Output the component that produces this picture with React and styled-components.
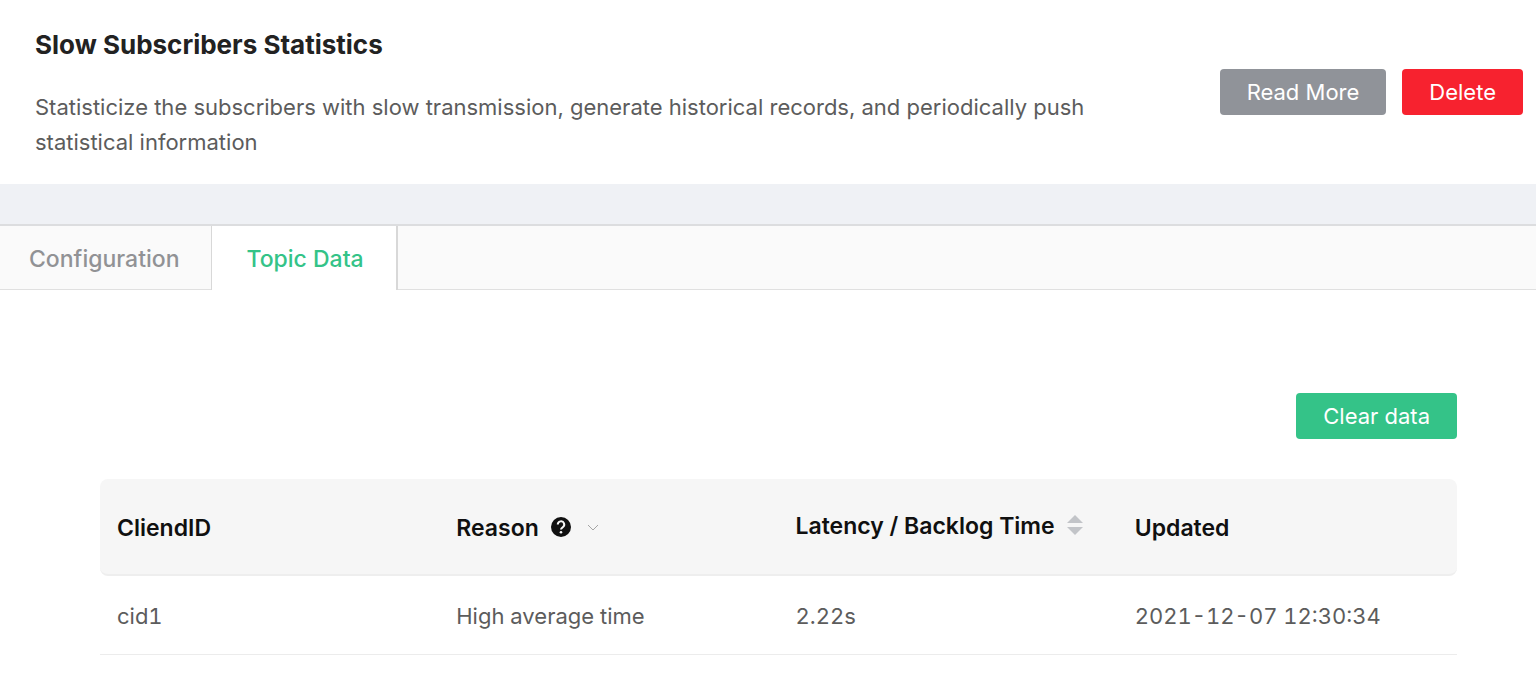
import React, {useState} from 'react';
import styled, {createGlobalStyle} from 'styled-components';

const GlobalStyle = createGlobalStyle`
	* {
		box-sizing: border-box;
	}
	body {
		margin: 0;
		background-color: #ffffff;
		color: #5c5c5c;
		font-family: Inter, 'Liberation Sans', sans-serif;
		font-size: 22px;
		font-optical-sizing: none;
		line-height: 35px;
	}
`;

const Header = styled.header`
	display: flex;
	align-items: center;
	justify-content: space-between;
	gap: 80px;
	padding: 24px 13px 24px 35px;
`;

const Intro = styled.div`
	max-width: 1080px;
`;

const Title = styled.h1`
	margin: 0 0 24px 0;
	color: #222222;
	font-size: 26px;
	font-weight: 700;
	line-height: 42px;
`;

const Description = styled.p`
	margin: 0;
`;

const Actions = styled.div`
	display: flex;
	flex-shrink: 0;
	gap: 16px;
`;

const buttonColors = {
	info: '#909399',
	danger: '#f7222f',
	primary: '#34c388'
};

const Button = styled.button`
	height: 46px;
	padding: 0 27px;
	border: none;
	border-radius: 4px;
	background-color: ${(props) => buttonColors[props.$kind]};
	color: #ffffff;
	font-family: inherit;
	font-size: 22px;
	line-height: 46px;
	white-space: nowrap;
	cursor: pointer;
`;

const TabStrip = styled.div`
	border-top: 40px solid #eff1f5;
`;

const TabBar = styled.div`
	display: flex;
	height: 66px;
	border-top: 2px solid #dcdddf;
	background-color: #fafafa;
	box-shadow: inset 0 -1px 0 0 #e0e0e0;
`;

const Tab = styled.button`
	padding: 2px 32px 0 34px;
	border: none;
	border-right: 1px solid #d8d8d8;
	background-color: transparent;
	color: #919295;
	font-family: inherit;
	font-size: 23px;
	font-weight: 500;
	cursor: pointer;
	&:first-child {
		padding-left: 29px;
	}
	&:last-child {
		border-right-width: 2px;
	}
	&[aria-selected='true'] {
		background-color: #ffffff;
		color: #34c388;
	}
`;

const Content = styled.main`
	padding: 103px 79px 20px 100px;
`;

const Toolbar = styled.div`
	display: flex;
	justify-content: flex-end;
	margin-bottom: 40px;
`;

const Table = styled.table`
	width: 100%;
	table-layout: fixed;
	border-collapse: separate;
	border-spacing: 0;
`;

const HeadCell = styled.th`
	height: 97px;
	padding: ${(props) => (props.$sortable ? '0 17px' : '4px 17px 0 17px')};
	border-bottom: 2px solid #eeeeee;
	background-color: #f6f6f6;
	color: #101010;
	font-size: 23px;
	font-weight: 600;
	text-align: left;
	white-space: nowrap;
	&:first-child {
		border-radius: 8px 0 0 8px;
	}
	&:last-child {
		border-radius: 0 8px 8px 0;
	}
`;

const HeadLabel = styled.span`
	display: flex;
	align-items: center;
	gap: 12px;
`;

const Cell = styled.td`
	height: 79px;
	padding: 2px 17px 0 17px;
	border-bottom: 1px solid #ececec;
	font-variant-numeric: tabular-nums;
`;

const Svg = styled.svg`
	display: block;
	flex-shrink: 0;
	margin-bottom: 3px;
`;

const HelpIcon = () => (
	<Svg width="20" height="20" viewBox="0 0 20 20">
		<circle cx="10" cy="10" r="10" fill="#101010" />
		<path
			d="M6.8 7.6a3.2 3.2 0 1 1 4.8 2.7c-1 .6-1.6 1.1-1.6 2.2"
			fill="none"
			stroke="#f6f6f6"
			strokeWidth="2"
		/>
		<circle cx="10" cy="15.2" r="1.3" fill="#f6f6f6" />
	</Svg>
);

const ArrowIcon = () => (
	<Svg width="20" height="20" viewBox="0 0 20 20">
		<path d="M5 8l5 5 5-5" fill="none" stroke="#a5a5a5" strokeWidth="1" />
	</Svg>
);

const SortIcon = () => (
	<Svg width="16" height="20" viewBox="0 0 16 20">
		<path d="M8 0l8 8H0z" fill="#c2c4c8" />
		<path d="M8 20l8-8H0z" fill="#c2c4c8" />
	</Svg>
);

const tabs = ['Configuration', 'Topic Data'];

const rows = [
	{
		id: 'cid1',
		reason: 'High average time',
		latency: '2.22s',
		updated: '2021-12-07 12:30:34'
	}
];

export default function App() {
	const [activeTab, setActiveTab] = useState('Topic Data');
	return (
		<>
			<GlobalStyle />
			<Header>
				<Intro>
					<Title>Slow Subscribers Statistics</Title>
					<Description>
						Statisticize the subscribers with slow transmission, generate
						historical records, and periodically push statistical information
					</Description>
				</Intro>
				<Actions>
					<Button $kind="info">Read More</Button>
					<Button $kind="danger">Delete</Button>
				</Actions>
			</Header>

			<TabStrip>
				<TabBar role="tablist">
					{tabs.map((tab) => (
						<Tab
							key={tab}
							role="tab"
							aria-selected={tab === activeTab}
							onClick={() => setActiveTab(tab)}
						>
							{tab}
						</Tab>
					))}
				</TabBar>
			</TabStrip>

			<Content>
				<Toolbar>
					<Button $kind="primary">Clear data</Button>
				</Toolbar>
				<Table>
					<thead>
						<tr>
							<HeadCell>CliendID</HeadCell>
							<HeadCell>
								<HeadLabel>
									Reason
									<HelpIcon />
									<ArrowIcon />
								</HeadLabel>
							</HeadCell>
							<HeadCell $sortable>
								<HeadLabel>
									Latency / Backlog Time
									<SortIcon />
								</HeadLabel>
							</HeadCell>
							<HeadCell>Updated</HeadCell>
						</tr>
					</thead>
					<tbody>
						{rows.map((row) => (
							<tr key={row.id}>
								<Cell>{row.id}</Cell>
								<Cell>{row.reason}</Cell>
								<Cell>{row.latency}</Cell>
								<Cell>{row.updated}</Cell>
							</tr>
						))}
					</tbody>
				</Table>
			</Content>
		</>
	);
}
